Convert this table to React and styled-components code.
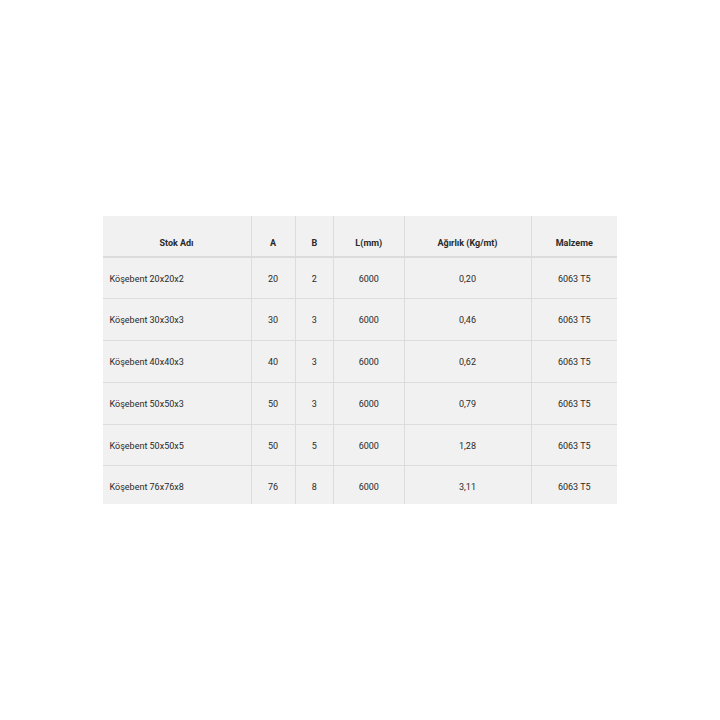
import React from "react";
import styled, { createGlobalStyle } from "styled-components";

const GlobalStyle = createGlobalStyle`
  html, body {
    margin: 0;
    padding: 0;
    background: #ffffff;
    font-family: Roboto, "Liberation Sans", Arial, sans-serif;
  }
`;

const Page = styled.div`
  width: 720px;
  height: 720px;
  padding: 216px 0 0 102.5px;
  box-sizing: border-box;
`;

const TableWrap = styled.div`
  width: 514.5px;
  height: 288px;
  overflow: hidden;
  background: #f1f1f1;
`;

const Table = styled.table`
  width: 100%;
  border-collapse: collapse;
  table-layout: fixed;
  color: #2a2a2a;
  font-size: 9px;
`;

const Th = styled.th`
  height: 41px;
  padding: 13px 4px 0;
  box-sizing: border-box;
  font-weight: 700;
  text-align: center;
  border-left: 1px solid #dcdcdc;
  border-bottom: 2px solid #dcdcdc;
  &:first-child {
    border-left: none;
  }
`;

const Td = styled.td`
  height: 41.8px;
  padding: 1px 7px 0;
  box-sizing: border-box;
  text-align: ${(p) => (p.$left ? "left" : "center")};
  border-left: 1px solid #dcdcdc;
  border-bottom: 1px solid #dcdcdc;
  &:first-child {
    border-left: none;
  }
`;

const columns = [
  { label: "Stok Adı", width: 148.5 },
  { label: "A", width: 44 },
  { label: "B", width: 38.5 },
  { label: "L(mm)", width: 70.5 },
  { label: "Ağırlık (Kg/mt)", width: 127 },
  { label: "Malzeme", width: 86 },
];

const rows = [
  ["Köşebent 20x20x2", "20", "2", "6000", "0,20", "6063 T5"],
  ["Köşebent 30x30x3", "30", "3", "6000", "0,46", "6063 T5"],
  ["Köşebent 40x40x3", "40", "3", "6000", "0,62", "6063 T5"],
  ["Köşebent 50x50x3", "50", "3", "6000", "0,79", "6063 T5"],
  ["Köşebent 50x50x5", "50", "5", "6000", "1,28", "6063 T5"],
  ["Köşebent 76x76x8", "76", "8", "6000", "3,11", "6063 T5"],
];

const App = () => {
  return (
    <Page>
      <GlobalStyle />
      <TableWrap>
        <Table>
          <colgroup>
            {columns.map((c) => (
              <col key={c.label} style={{ width: c.width }} />
            ))}
          </colgroup>
          <thead>
            <tr>
              {columns.map((c) => (
                <Th key={c.label}>{c.label}</Th>
              ))}
            </tr>
          </thead>
          <tbody>
            {rows.map((row) => (
              <tr key={row[0]}>
                {row.map((cell, i) => (
                  <Td key={i} $left={i === 0}>
                    {cell}
                  </Td>
                ))}
              </tr>
            ))}
          </tbody>
        </Table>
      </TableWrap>
    </Page>
  );
};

export default App;
